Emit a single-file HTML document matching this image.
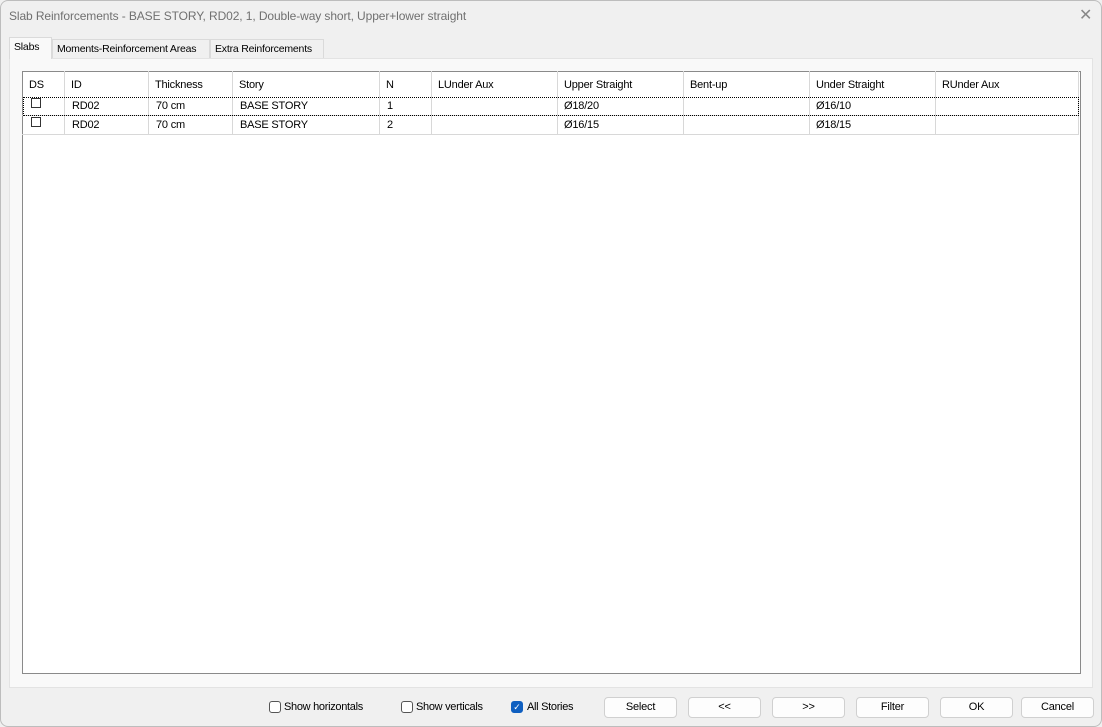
<!DOCTYPE html>
<html><head><style>
*{margin:0;padding:0;box-sizing:border-box}
body{width:1102px;height:727px;background:#f0f0f0;font-family:"Liberation Sans",sans-serif;font-size:11px;color:#000;position:relative;overflow:hidden}
.win{position:absolute;left:0;top:0;width:1102px;height:727px;box-shadow:inset 0 0 0 1px #bdbdbd;border-radius:8px;background:#f0f0f0}
.title{position:absolute;left:9px;top:9px;font-size:12px;color:#707070;letter-spacing:-0.1px}
.x{position:absolute;left:1079px;top:5px;font-size:16px;color:#888;font-weight:300}
.tab{position:absolute;top:39px;height:19px;border:1px solid #dadada;border-bottom:none;background:#f0f0f0;padding:3px 4px;font-size:10.5px;white-space:nowrap;overflow:hidden;letter-spacing:-0.2px}
.panel{position:absolute;left:9px;top:58px;width:1084px;height:630px;background:#f9f9f9;border:1px solid #e3e3e3}
.grid{position:absolute;left:22px;top:71px;width:1059px;height:603px;background:#fff;border:1px solid #8a8a8a}
.in{position:absolute;left:-1px;top:-1px}
.c{position:absolute;font-size:11px;white-space:nowrap;letter-spacing:-0.2px}
.vl{position:absolute;width:1px;background:#d8d8d8;top:0;height:63px}
.hl{position:absolute;height:1px;background:#d8d8d8;left:0;width:1057px}
.cb{position:absolute;width:10px;height:10px;border:1px solid #333;background:#fff}
.btn{position:absolute;top:697px;height:21px;width:73px;background:#fdfdfd;border:1px solid #d0d0d0;border-radius:4px;text-align:center;line-height:19px;font-size:11px;letter-spacing:-0.2px}
.chk{position:absolute;top:701px;width:12px;height:12px;border:1px solid #555;border-radius:3px;background:#fff}
.lbl{position:absolute;top:701px;font-size:11px;letter-spacing:-0.3px}
</style></head><body>
<div class="win">
<div class="title">Slab Reinforcements - BASE STORY, RD02, 1, Double-way short, Upper+lower straight</div>
<div class="x">✕</div>
<div class="panel"></div>
<div class="tab" style="left:9px;top:37px;height:22px;background:#f9f9f9;width:43px;border-color:#dadada">Slabs</div>
<div class="tab" style="left:52px;width:158px">Moments-Reinforcement Areas</div>
<div class="tab" style="left:210px;width:114px">Extra Reinforcements</div>
<div class="grid"><div class="in">
 <div class="vl" style="left:42px"></div><div class="vl" style="left:126px"></div><div class="vl" style="left:210px"></div><div class="vl" style="left:357px"></div><div class="vl" style="left:409px"></div><div class="vl" style="left:535px"></div><div class="vl" style="left:661px"></div><div class="vl" style="left:787px"></div><div class="vl" style="left:913px"></div><div class="vl" style="left:1056px"></div>
 <div class="hl" style="top:44px"></div><div class="hl" style="top:63px"></div>
 <div style="position:absolute;left:1px;top:26px;width:1056px;height:19px;border:1px dotted #000"></div>
 <div class="c" style="left:7px;top:8px">DS</div><div class="c" style="left:49px;top:8px">ID</div><div class="c" style="left:133px;top:8px">Thickness</div><div class="c" style="left:217px;top:8px">Story</div><div class="c" style="left:364px;top:8px">N</div><div class="c" style="left:416px;top:8px">LUnder Aux</div><div class="c" style="left:542px;top:8px">Upper Straight</div><div class="c" style="left:668px;top:8px">Bent-up</div><div class="c" style="left:794px;top:8px">Under Straight</div><div class="c" style="left:920px;top:8px">RUnder Aux</div>
 <div class="cb" style="left:9px;top:27px"></div><div class="c" style="left:50px;top:29px">RD02</div><div class="c" style="left:134px;top:29px">70 cm</div><div class="c" style="left:218px;top:29px">BASE STORY</div><div class="c" style="left:365px;top:29px">1</div><div class="c" style="left:542px;top:29px">Ø18/20</div><div class="c" style="left:794px;top:29px">Ø16/10</div>
 <div class="cb" style="left:9px;top:46px"></div><div class="c" style="left:50px;top:48px">RD02</div><div class="c" style="left:134px;top:48px">70 cm</div><div class="c" style="left:218px;top:48px">BASE STORY</div><div class="c" style="left:365px;top:48px">2</div><div class="c" style="left:542px;top:48px">Ø16/15</div><div class="c" style="left:794px;top:48px">Ø18/15</div>
</div></div>
<div class="chk" style="left:269px"></div><div class="lbl" style="left:284px">Show horizontals</div>
<div class="chk" style="left:401px"></div><div class="lbl" style="left:416px">Show verticals</div>
<div class="chk" style="left:511px;background:#0f5fc0;border-color:#0f5fc0;color:#fff;font-size:9px;line-height:10px;text-align:center">✓</div><div class="lbl" style="left:527px">All Stories</div>
<div class="btn" style="left:604px">Select</div>
<div class="btn" style="left:688px">&lt;&lt;</div>
<div class="btn" style="left:772px">&gt;&gt;</div>
<div class="btn" style="left:856px">Filter</div>
<div class="btn" style="left:940px">OK</div>
<div class="btn" style="left:1021px">Cancel</div>
</div>
</body></html>
